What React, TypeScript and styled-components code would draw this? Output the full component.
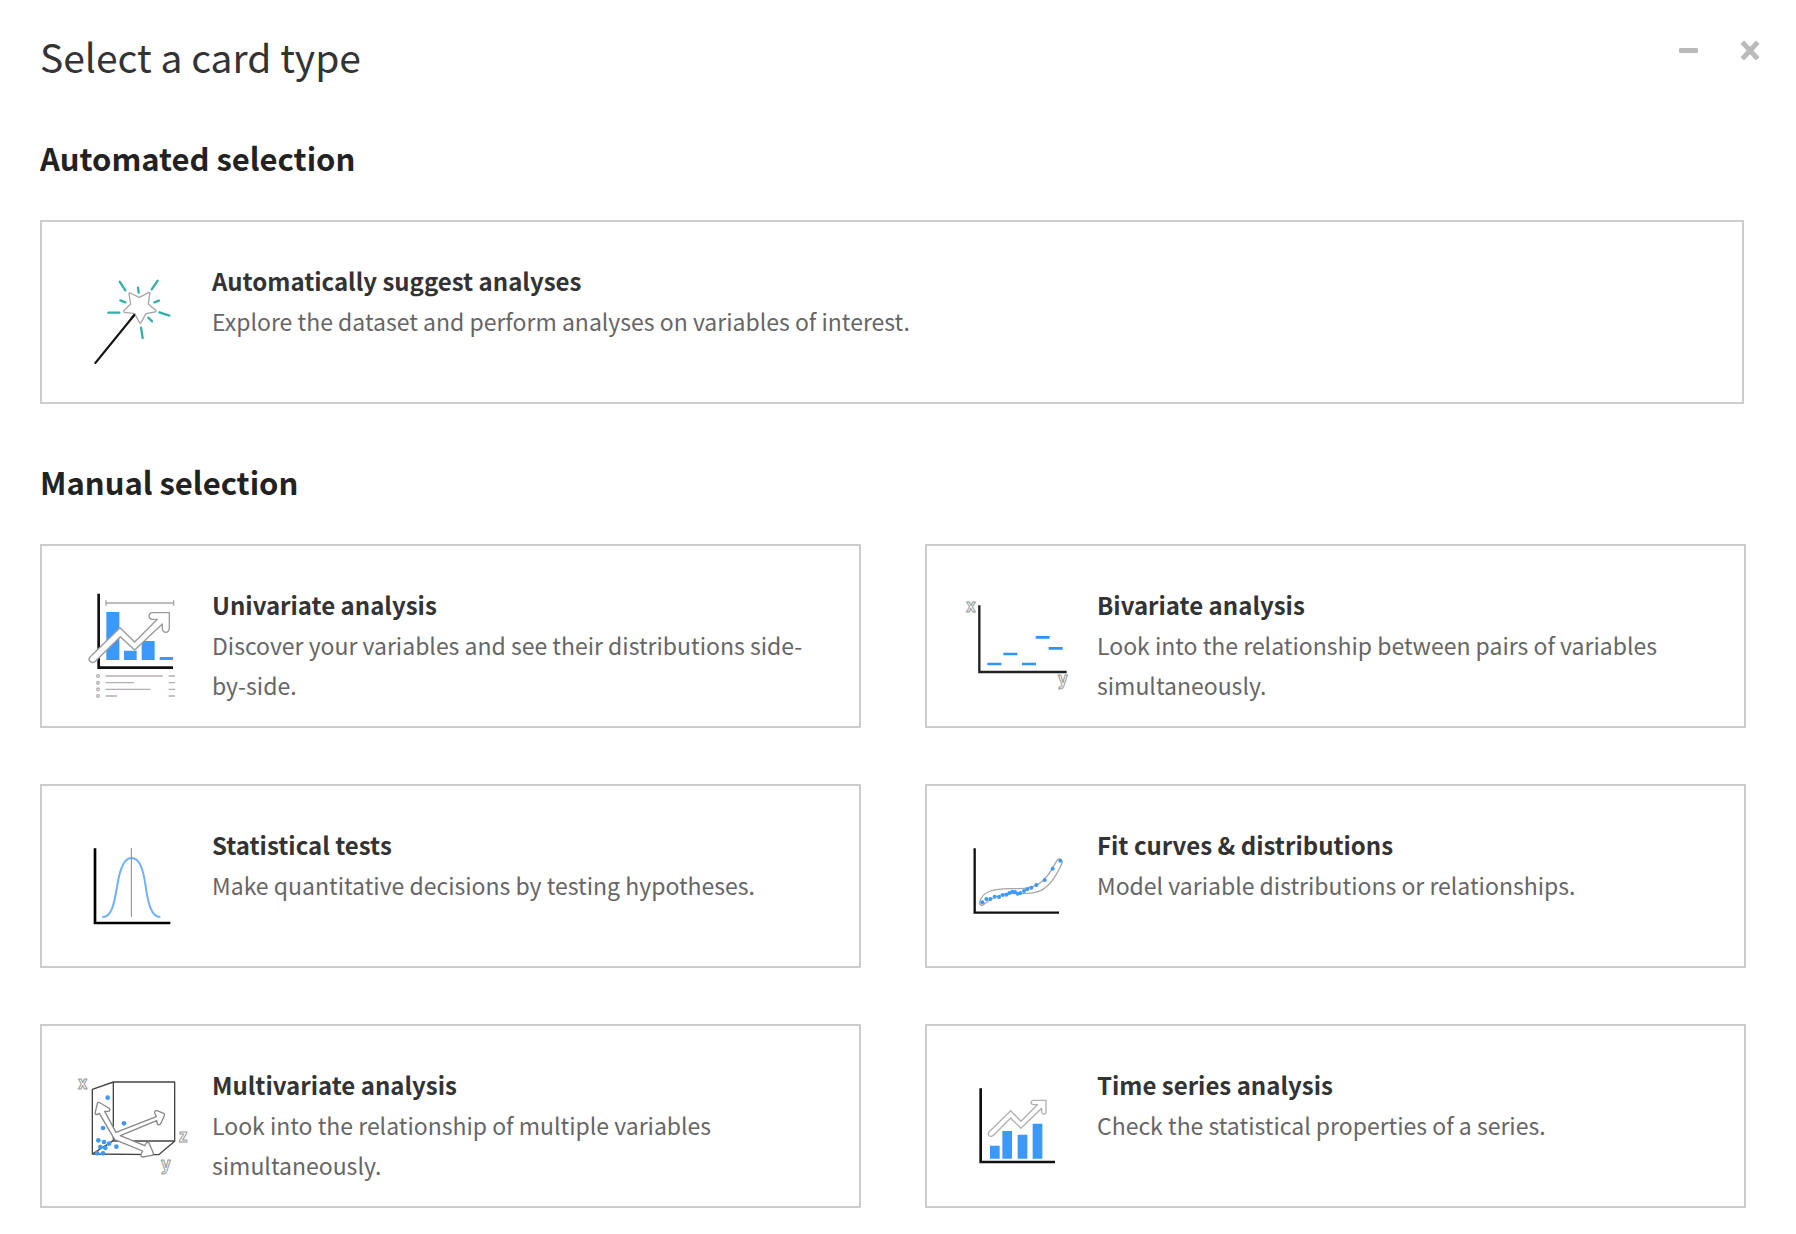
import React from "react";
import styled, { createGlobalStyle } from "styled-components";

const GlobalStyle = createGlobalStyle`
  *, *::before, *::after { box-sizing: border-box; }
  body {
    margin: 0;
    background: #fff;
    color: #333;
    font-family: "Noto Sans CJK SC", "Noto Sans", sans-serif;
  }
`;

const Dialog = styled.main`
  padding: 32px 50px 26px 40px;
`;

const Header = styled.header`
  display: flex;
  justify-content: space-between;
  align-items: flex-start;
  margin: 0 -14px 58px 0;
`;

const Title = styled.h1`
  margin: 0;
  font-size: 39px;
  line-height: 48px;
  font-weight: 400;
`;

const WindowActions = styled.div`
  display: flex;
  gap: 42px;
  padding-top: 8px;
`;

const IconButton = styled.button`
  display: flex;
  width: 20px;
  height: 20px;
  padding: 0;
  border: 0;
  background: none;
  cursor: pointer;
`;

const Section = styled.section`
  & + & { margin-top: 58px; }
`;

const SectionTitle = styled.h2`
  margin: 0 0 42px;
  color: #222;
  font-size: 31px;
  line-height: 40px;
  font-weight: 700;
`;

const WideRow = styled.div`
  display: grid;
  padding-right: 2px;
`;

const CardGrid = styled.div`
  display: grid;
  grid-template-columns: repeat(2, minmax(0, 1fr));
  gap: 56px 64px;
`;

const Card = styled.button`
  display: flex;
  align-items: flex-start;
  gap: 12px;
  min-height: 184px;
  padding: 0 40px 0 18px;
  border: 2px solid #ccc;
  background: #fff;
  color: inherit;
  font: inherit;
  text-align: left;
  cursor: pointer;
  &:hover { border-color: #3b99fc; }
`;

const CardArt = styled.svg`
  flex: none;
  width: 140px;
  height: 140px;
  margin-top: 34px;
`;

const CardText = styled.span`
  display: flex;
  flex-direction: column;
  padding-top: 39px;
  font-size: 23px;
  line-height: 40px;
`;

const CardName = styled.span`
  font-size: 24px;
  font-weight: 700;
`;

const CardDescription = styled.span`
  color: #666;
`;

const BLUE = "#3b99fc";
const INK = "#111";
const GREY = "#a6a6ab";

const WandArt = () => (
  <CardArt viewBox="-30 -12 420 420" fill="none" strokeLinecap="round" strokeLinejoin="round" aria-hidden="true">
    <path d="M76 309 193 165" stroke={INK} strokeWidth="6" />
    <path
      d="M180 99 208 112 237 97Q241 98 239 102L235 132 257 151Q260 154 255 156L228 161 213 188Q210 191 208 187L194 161 164 157Q159 155 163 151L182 132 177 102Q177 98 180 99Z"
      fill="#fff" stroke={GREY} strokeWidth="4"
    />
    <path d="M193 165 183 177" stroke={INK} strokeWidth="6" />
    <path
      d="M149 65 166 91M263 62 245 88M204 83 206 98M151 121 166 127M253 127 267 122M115 158H148M268 157 298 167M235 173 246 184M213 203 218 234"
      stroke="#35b0a6" strokeWidth="7"
    />
  </CardArt>
);

const UnivariateArt = () => (
  <CardArt viewBox="-30 0 420 420" fill="none" aria-hidden="true">
    <path d="M86 41V263H309" stroke={INK} strokeWidth="8" />
    <path d="M108 69H311M108 61V77M311 61V77" stroke={GREY} strokeWidth="4" />
    <path fill={BLUE} d="M109 96H148V240H109ZM162 212H200V240H162ZM215 183H254V240H215ZM269 231H309V240H269Z" />
    <path
      d="M60 231 150 143 194 186 262 118H246Q237 116 237 107 238 99 247 98H298V145Q296 157 287 157 278 156 277 145V132L194 210 151 170 76 244Q68 251 60 244 54 238 60 231Z"
      fill="#fff" stroke="#9a9a9f" strokeWidth="4" strokeLinejoin="round"
    />
    <g stroke="#b5adb5" strokeWidth="4">
      <circle cx="84" cy="288" r="4" />
      <circle cx="84" cy="308" r="4" />
      <circle cx="84" cy="328" r="4" />
      <circle cx="84" cy="348" r="4" />
      <path d="M107 288H278M107 308H192M107 328H242M107 348H141M296 288H315M296 308H315M296 328H315M296 348H315" />
    </g>
  </CardArt>
);

const AxisLabel = styled.text`
  fill: #fff;
  stroke: #999;
  stroke-width: 3px;
  font-family: "Noto Sans CJK SC", "Noto Sans", sans-serif;
  font-size: 50px;
  font-weight: 700;
`;

const BivariateArt = () => (
  <CardArt viewBox="-15 0 420 420" fill="none" aria-hidden="true">
    <path d="M88 76V276H350" stroke="#222" strokeWidth="7" />
    <path
      d="M112 252H154M160 222H202M216 252H258M257 172H299M296 205H338"
      stroke="#2f93ff" strokeWidth="8"
    />
    <AxisLabel x="49" y="97">x</AxisLabel>
    <AxisLabel x="324" y="316">y</AxisLabel>
  </CardArt>
);

const BellArt = () => (
  <CardArt viewBox="-30 0 420 420" fill="none" aria-hidden="true">
    <path d="M75 85V309H301" stroke="#000" strokeWidth="8" />
    <path
      d="M97 291C124 293 133 252 142 195 151 139 164 114 184 114 207 114 219 141 227 199 234 250 244 291 271 291"
      stroke="#6db1ff" strokeWidth="6"
    />
    <path d="M184 84V291" stroke="#888" strokeWidth="3" />
  </CardArt>
);

const FIT_POINTS = [
  [97, 247], [109, 237], [121, 237], [134, 230], [147, 231], [158, 225], [169, 224],
  [178, 219], [187, 215], [195, 216], [203, 221], [211, 219], [222, 213], [232, 208],
  [244, 203], [259, 195], [284, 180], [308, 146], [331, 122],
];

const FitArt = () => (
  <CardArt viewBox="-15 0 420 420" fill="none" aria-hidden="true">
    <path d="M74 85V278H327" stroke={INK} strokeWidth="7" />
    <path
      d="M89 247C96 213 134 206 180 206 220 206 240 206 264 193 291 178 306 146 321 121 328 112 340 121 335 132 318 170 300 198 272 212 245 224 216 221 190 220 157 220 127 230 103 252 97 259 87 255 89 247Z"
      stroke={GREY} strokeWidth="4"
    />
    {FIT_POINTS.map(([x, y]) => (
      <circle key={x} cx={x} cy={y} r="6" fill={BLUE} />
    ))}
  </CardArt>
);

const CLOUD_POINTS = [
  [143, 113], [129, 204], [192, 190], [115, 241], [132, 246], [147, 251],
  [121, 261], [136, 264], [169, 260], [112, 280], [129, 280],
];

const MultivariateArt = () => (
  <CardArt viewBox="0 0 420 420" fill="none" strokeLinejoin="round" aria-hidden="true">
    <path
      d="M97 282V88L160 66H344V244L296 284 97 282 160 242V66M160 243H344"
      stroke="#444" strokeWidth="4"
    />
    {CLOUD_POINTS.map(([x, y]) => (
      <circle key={`${x}-${y}`} cx={x} cy={y} r="7" fill={BLUE} />
    ))}
    <path
      d="M168 217 289 170 284 158Q283 151 291 152L311 160Q315 163 313 167L302 191Q297 198 292 192L290 182 181 227 254 257 259 249Q263 245 267 249L280 279Q281 285 276 286L248 291Q241 290 243 282L248 273 164 239 118 160 110 164Q104 163 106 156L112 130Q115 125 121 129L146 144Q153 149 147 154L134 154Z"
      fill="#fff" stroke="#888" strokeWidth="4"
    />
    <AxisLabel x="54" y="88">x</AxisLabel>
    <AxisLabel x="356" y="245">z</AxisLabel>
    <AxisLabel x="303" y="329">y</AxisLabel>
  </CardArt>
);

const TimeSeriesArt = () => (
  <CardArt viewBox="-15 0 420 420" fill="none" aria-hidden="true">
    <path d="M92 85V306H315" stroke={INK} strokeWidth="8" />
    <path fill={BLUE} d="M120 257H149V296H120ZM157 213H186V296H157ZM203 224H232V296H203ZM248 191H277V296H248Z" />
    <path
      d="M117 216 182 152 213 184 262 134H250Q243 133 243 127 244 122 250 121H288V156Q287 163 281 163 276 162 275 156V145L213 205 182 174 129 227Q122 231 117 227 113 221 117 216Z"
      fill="#fff" stroke="#b0b0b5" strokeWidth="4" strokeLinejoin="round"
    />
  </CardArt>
);

type CardType = { name: string; description: string; Art: React.FC };

const AUTOMATED: CardType[] = [
  {
    name: "Automatically suggest analyses",
    description: "Explore the dataset and perform analyses on variables of interest.",
    Art: WandArt,
  },
];

const MANUAL: CardType[] = [
  {
    name: "Univariate analysis",
    description: "Discover your variables and see their distributions side-by-side.",
    Art: UnivariateArt,
  },
  {
    name: "Bivariate analysis",
    description: "Look into the relationship between pairs of variables simultaneously.",
    Art: BivariateArt,
  },
  {
    name: "Statistical tests",
    description: "Make quantitative decisions by testing hypotheses.",
    Art: BellArt,
  },
  {
    name: "Fit curves & distributions",
    description: "Model variable distributions or relationships.",
    Art: FitArt,
  },
  {
    name: "Multivariate analysis",
    description: "Look into the relationship of multiple variables simultaneously.",
    Art: MultivariateArt,
  },
  {
    name: "Time series analysis",
    description: "Check the statistical properties of a series.",
    Art: TimeSeriesArt,
  },
];

const TypeCard = ({ name, description, Art }: CardType) => (
  <Card type="button">
    <Art />
    <CardText>
      <CardName>{name}</CardName>
      <CardDescription>{description}</CardDescription>
    </CardText>
  </Card>
);

export default function App() {
  return (
    <>
      <GlobalStyle />
      <Dialog>
        <Header>
          <Title>Select a card type</Title>
          <WindowActions>
            <IconButton type="button" aria-label="Minimize">
              <svg width="20" height="20" viewBox="0 0 20 20" aria-hidden="true">
                <rect x="1" y="8" width="19" height="5" rx="1" fill="#bbb" />
              </svg>
            </IconButton>
            <IconButton type="button" aria-label="Close">
              <svg width="20" height="20" viewBox="0 0 20 20" aria-hidden="true">
                <path d="M4 4 16 17M16 4 4 17" stroke="#bbb" strokeWidth="5" strokeLinecap="square" />
              </svg>
            </IconButton>
          </WindowActions>
        </Header>
        <Section>
          <SectionTitle>Automated selection</SectionTitle>
          <WideRow>
            {AUTOMATED.map((card) => <TypeCard key={card.name} {...card} />)}
          </WideRow>
        </Section>
        <Section>
          <SectionTitle>Manual selection</SectionTitle>
          <CardGrid>
            {MANUAL.map((card) => <TypeCard key={card.name} {...card} />)}
          </CardGrid>
        </Section>
      </Dialog>
    </>
  );
}
